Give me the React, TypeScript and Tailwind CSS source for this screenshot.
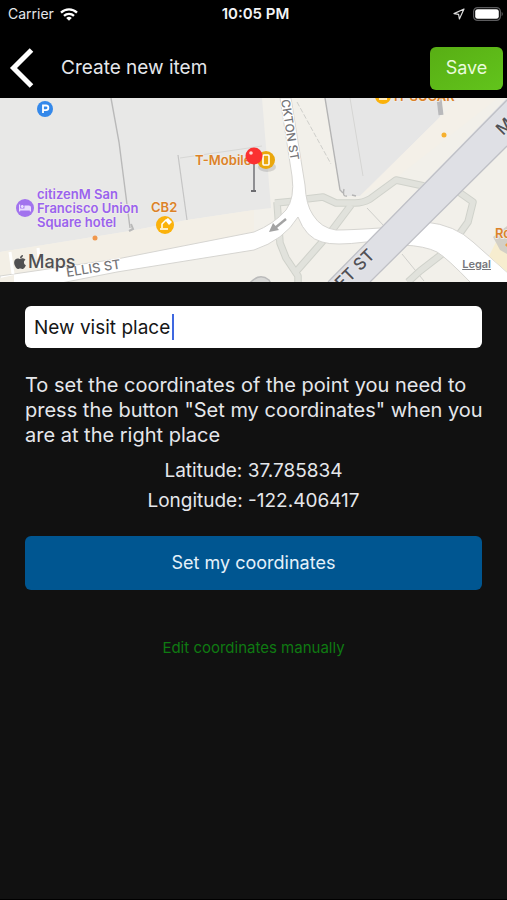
import { useState } from "react";
import { FaApple, FaBed } from "react-icons/fa";

function StatusBar() {
  return (
    <div className="grid h-7 grid-cols-3 items-center bg-black pl-2 pr-1 text-sm text-gray-200">
      <div className="flex items-center gap-1.5">
        <span>Carrier</span>
        <svg viewBox="0 0 18 13" className="h-[13px] w-[18px]" fill="none" stroke="#fff" strokeWidth="2.3">
          <path d="M1 4.6a11.5 11.5 0 0 1 16 0" />
          <path d="M4 7.9a7.2 7.2 0 0 1 10 0" />
          <path d="M9 12.8 6.2 10a4 4 0 0 1 5.6 0z" fill="#fff" stroke="none" />
        </svg>
      </div>
      <span className="text-center text-[15px] font-semibold text-gray-100">10:05 PM</span>
      <div className="flex items-center justify-end gap-2">
        <svg viewBox="0 0 12 12" className="size-3" fill="none" stroke="#ddd" strokeWidth="1.2" strokeLinejoin="round">
          <path d="M11 1 1 5.6l4.6.8.8 4.6z" />
        </svg>
        <svg viewBox="0 0 30 14" className="h-[14px] w-[30px]">
          <rect x="0.6" y="0.6" width="26.8" height="12.8" rx="4" fill="none" stroke="#5c5c5e" strokeWidth="1.2" />
          <rect x="2.2" y="2.2" width="23.6" height="9.6" rx="2.4" fill="#fff" />
          <path d="M28.6 4.8a2.6 2.6 0 0 1 0 4.4z" fill="#5c5c5e" />
        </svg>
      </div>
    </div>
  );
}

function Header() {
  return (
    <header className="flex h-[70px] items-center bg-black pl-2 pr-1 pt-2.5">
      <button type="button" aria-label="Back" className="flex w-[53px] items-center">
        <svg viewBox="0 0 26 42" className="h-[42px] w-[26px]" fill="none" stroke="#fff" strokeWidth="5">
          <path d="M23.5 3 5.5 21l18 18" />
        </svg>
      </button>
      <h1 className="flex-1 text-[19px] text-gray-200">Create new item</h1>
      <button
        type="button"
        className="h-[43px] w-[73px] rounded-md bg-linear-to-br from-[#58ae14] to-[#62c41c] text-lg text-[#e9fbdc]"
      >
        Save
      </button>
    </header>
  );
}

function MapView() {
  return (
    <div className="relative h-[184px] overflow-hidden bg-[#f3f1ea]">
      <svg viewBox="0 0 507 184" preserveAspectRatio="xMidYMid slice" className="block size-full">
        <rect width="507" height="184" fill="#f2f0ea" />
        <path d="M0 154 130 133 187 122 254 112 271 110 262 0H0z" fill="#e8e8e7" />
        <path d="M0 154 130 133 187 122 254 112V140L117 161 0 178z" fill="#f3efe6" />

        {/* building outlines */}
        <g fill="none" stroke="#b9b9b9" strokeWidth="1.4">
          <path d="M111 0 119 44 130 130" />
          <path d="M129 133l4-2-2-5" strokeWidth="2" />
          <path d="M178 57 187 122" stroke="#c4c4c4" strokeWidth="1.2" />
          <path d="M180 60 235 52 262 48" stroke="#d7d7d5" strokeWidth="1" />
        </g>

        {/* block between Stockton and Market */}
        <path d="M325 0 340 92 347 98H360L440 19V0z" fill="#e6e6e6" />
        <path d="M360 98 440 19 462 0H498L396 80z" fill="#f4f0e8" />
        <g fill="none" stroke="#b4b4b4">
          <path d="M325 0 340 92 343 95" strokeWidth="1.4" />
          <path d="M344 91q-2 8 3 7M352 97l4 1" strokeWidth="1.4" />
          <path d="M439 0 441 17" stroke="#b9b9bb" strokeWidth="5" />
          <path d="M350 0 363 78" stroke="#d5d5d3" strokeWidth="1" />
          <path d="M297 4 331 66" stroke="#cfcfcb" strokeWidth="1" strokeDasharray="5 2" />
          <path d="M367 110 384 128M402 156 424 183" stroke="#cfcfcb" strokeWidth="1" />
        </g>

        {/* crosswalks */}
        <g fill="none" strokeLinejoin="round">
          <g stroke="#d0d2cb" strokeWidth="7.5">
            <path d="M306 101 323 99 336 105H355Q363 105 370 101L396 82 424 88" />
            <path d="M275 105 296 103M277 104 280 145 286 160 298 178V184M351 107 330 135 294 176" />
            <path d="M456 92 473 104 468 124 458 138M442 156 420 173 408 184" />
          </g>
          <g stroke="#e1e2dc" strokeWidth="5.5">
            <path d="M306 101 323 99 336 105H355Q363 105 370 101L396 82 424 88" />
            <path d="M275 105 296 103M277 104 280 145 286 160 298 178V184M351 107 330 135 294 176" />
            <path d="M456 92 473 104 468 124 458 138M442 156 420 173 408 184" />
          </g>
        </g>

        {/* streets */}
        <path
          d="M280 0 292 78Q295 100 286 112 274 126 254 134L117 161 0 178V186H56L117 174 254 152Q284 142 298 119 306 140 322 144 334 148 366 144L403 147Q425 148 437 154 447 160 472 186H509V176L473 144Q455 127 426 124L380 130Q350 132 336 132 321 130 313 117 306 107 305 87L291 0z"
          fill="#fff"
          stroke="#d6d5d1"
          strokeWidth="1"
        />
        <path d="M489 158 498 140 507 143V174z" fill="#f7edcf" />
        <path d="M493 139 507 128V156L500 152z" fill="#d3cfc6" />
        <path d="M507 0 328 184H370L507 48z" fill="#dfe0e5" />
        <path d="M507 2 328 184M507 48 370 184" stroke="#bfc0c6" strokeWidth="1.3" />
        <path d="M0 180 14 177V184H0z" fill="#f3efe6" />
        <path d="M10 154 13 176M38 150 40 170" stroke="#fff" strokeWidth="3" />
        <path d="M250 184q10-12 20-4l2 4" transform="translate(-1 2)" fill="#d8d8d6" stroke="#bbb" strokeWidth="1.5" />

        <path d="M286 121 275 130" stroke="#a3a3a3" strokeWidth="2.4" />
        <path d="M269 134 273 125 279 132z" fill="#a3a3a3" />

        {/* street names */}
        <g fill="#77777a" stroke="#fff" strokeWidth="2" paintOrder="stroke" fontSize="12" fontWeight="500">
          <text transform="translate(67 179) rotate(-9)" fontSize="13">ELLIS ST</text>
          <text transform="translate(281 2) rotate(81)">CKTON ST</text>
          <g fill="#515156" stroke="#e4e5ea" fontSize="17">
            <text transform="translate(342 192) rotate(-45)">ET ST</text>
            <text transform="translate(503 38) rotate(-45)">M</text>
          </g>
        </g>

        {/* places */}
        <g fontSize="13" fontWeight="600" stroke="#f0eeea" strokeWidth="1.5" paintOrder="stroke">
          <g fill="#9a63ee">
            <text x="37" y="101">citizenM San</text>
            <text x="37" y="115">Francisco Union</text>
            <text x="37" y="129">Square hotel</text>
          </g>
          <g fill="#dc8228">
            <text x="151" y="114">CB2</text>
            <text x="195" y="67">T-Mobile</text>
            <text x="394" y="3">IT SUGAR</text>
            <text x="495" y="140">Ro</text>
          </g>
        </g>
        <circle cx="45" cy="11" r="8" fill="#3488ea" />
        <path d="M43 15V7.500H46a2.300 2.300 0 0 1 0 4.700H43" fill="none" stroke="#fff" strokeWidth="1.8" />
        <circle cx="25" cy="110" r="9" fill="#a273ee" />
        <FaBed x={19} y={104} size={12} color="#e9dcff" />
        <circle cx="165" cy="127" r="9" fill="#fbb20b" />
        <path d="M160 131h8M162 130v-4l4-4" fill="none" stroke="#fff" strokeWidth="1.5" />
        <path d="m165 122 3-2 4 4-3 3z" fill="#fff" />
        <circle cx="383" cy="-2" r="8" fill="#fbb20b" />
        <path d="M379 1h8" stroke="#fff" strokeWidth="1.5" />
        <circle cx="95" cy="140" r="2.500" fill="#f0974d" />
        <circle cx="444" cy="37" r="2.500" fill="#f6b02e" />
        <path d="M505 147l2-2v4z" fill="#ef9d3a" />

        {/* pin */}
        <ellipse cx="267" cy="69" rx="9" ry="5" fill="#000" opacity="0.12" />
        <circle cx="266" cy="62" r="9" fill="#eaa70c" />
        <rect x="263" y="57" width="6" height="10" rx="1" fill="none" stroke="#fff" strokeWidth="1.6" />
        <path d="M254 66V93" stroke="#8f8f92" strokeWidth="2" />
        <path d="M251 93h5" stroke="#6c6c70" strokeWidth="2" />
        <circle cx="254" cy="58" r="8.500" fill="#fb3131" />
        <circle cx="251" cy="55" r="1.800" fill="#ffd6d2" />
      </svg>
      <div className="absolute bottom-1.5 left-3 flex items-center text-lg font-medium text-[#505052]">
        <FaApple className="size-4" />
        <span>Maps</span>
      </div>
      <a href="#legal" className="absolute bottom-2.5 right-4 text-[11px] font-semibold text-[#77777c] underline">
        Legal
      </a>
    </div>
  );
}

export default function App() {
  const [name, setName] = useState("New visit place");

  return (
    <div className="flex min-h-screen flex-col border-b border-black bg-[#111111] font-['Inter','Liberation_Sans',sans-serif]">
      <StatusBar />
      <Header />
      <MapView />
      <main className="flex flex-col px-[25px] pt-6 text-[19px] text-gray-200">
        <div className="relative">
          <input
            type="text"
            aria-label="Item name"
            value={name}
            onChange={(e) => setName(e.target.value)}
            className="block h-[42px] w-full rounded-md bg-white px-[9px] text-[#161616] outline-none"
          />
          <span className="absolute left-[147px] top-2 h-[26px] w-0.5 bg-[#3f68e0]" />
        </div>
        <p className="-mr-3 mt-[25px] text-xl leading-[25px]">
          To set the coordinates of the point you need to press the button "Set my coordinates" when you are at the
          right place
        </p>
        <div className="mt-2 text-center leading-[30px]">
          <p>Latitude: 37.785834</p>
          <p>Longitude: -122.406417</p>
        </div>
        <button type="button" className="mt-5 h-[54px] rounded-md bg-[#005691] text-lg text-[#e4f1fa]">
          Set my coordinates
        </button>
        <button type="button" className="mt-12 self-center text-[15px] leading-5 text-[#0f7a12]">
          Edit coordinates manually
        </button>
      </main>
    </div>
  );
}
